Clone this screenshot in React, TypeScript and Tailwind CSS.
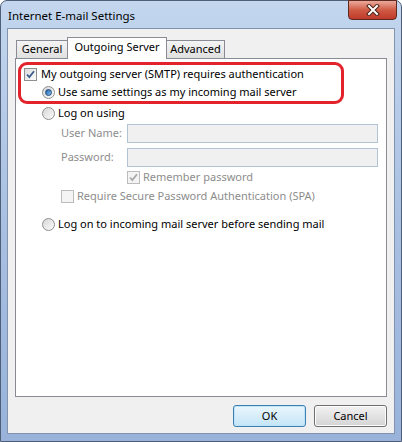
import React from 'react';

const font = "font-['Noto_Sans','Open_Sans',sans-serif]";

function CheckBox({ checked, disabled }: { checked?: boolean; disabled?: boolean }) {
  return (
    <span
      className={`relative flex h-[13px] w-[13px] shrink-0 items-center justify-center border ${
        disabled ? 'border-[#bcbcbc] bg-[#f4f4f4]' : 'border-[#8e8f8f] bg-gradient-to-br from-[#dcdcdc] to-[#fdfdfd]'
      }`}
    >
      {checked && (
        <svg width="11" height="11" viewBox="0 0 11 11">
          <path
            d="M2 5.5 L4.3 8 L9 2.2"
            fill="none"
            stroke={disabled ? '#a9a9a9' : '#3b5a8c'}
            strokeWidth="1.8"
          />
        </svg>
      )}
    </span>
  );
}

function Radio({ checked }: { checked?: boolean }) {
  return (
    <span className="flex h-[13px] w-[13px] shrink-0 items-center justify-center rounded-full border border-[#8e8f8f] bg-gradient-to-br from-[#d6d6d6] to-[#fcfcfc]">
      {checked && (
        <span className="h-[7px] w-[7px] rounded-full border border-[#1d4a80] bg-gradient-to-br from-[#1a5aa3] to-[#8cc6f2]" />
      )}
    </span>
  );
}

function Row({ children, className = '' }: { children: React.ReactNode; className?: string }) {
  return <div className={`flex h-[18px] items-center ${className}`}>{children}</div>;
}

export default function App() {
  return (
    <div className={`h-[442px] w-[402px] bg-white text-[11px] text-black ${font}`}>
      <div className="flex h-full w-full flex-col rounded-t-[7px] border border-[#4f5f78] bg-gradient-to-b from-[#c3d6ee] via-[#a9c0e2] to-[#98b2da] px-[6px] pb-[7px]">
        {/* Title bar */}
        <div className="flex h-[27px] items-start justify-between">
          <span className="pl-px pt-[7px] text-[11.5px] leading-[16px] text-black">Internet E-mail Settings</span>
          <div className="-mt-px mr-[-2px] flex h-[20px] w-[49px] items-center justify-center rounded-b-[4px] border border-[#5e2a20] bg-gradient-to-b from-[#e9a99b] via-[#cf5a44] to-[#c0392b]">
            <svg width="16" height="12" viewBox="0 0 16 12">
              <path d="M4 2 L12 10 M12 2 L4 10" stroke="#4a2118" strokeWidth="4" strokeLinecap="square" />
              <path d="M4 2 L12 10 M12 2 L4 10" stroke="#ffffff" strokeWidth="2" strokeLinecap="square" />
            </svg>
          </div>
        </div>

        {/* Client area */}
        <div className="flex flex-1 flex-col border border-[#8293ad] bg-[#f0f0f0] px-[7px] pt-[8px]">
          {/* Tabs */}
          <div className="relative z-10 flex h-[21px] items-end pl-px">
            <div className="flex h-[18px] w-[51px] items-center justify-center border border-b-0 border-r-0 border-[#898c95] bg-gradient-to-b from-[#f4f4f4] to-[#e0e0e0]">
              General
            </div>
            <div className="-mb-px flex h-[22px] w-[100px] items-center justify-center border border-b-0 border-[#898c95] bg-white pb-[3px]">
              Outgoing Server
            </div>
            <div className="flex h-[18px] w-[58px] items-center justify-center border border-b-0 border-l-0 border-[#898c95] bg-gradient-to-b from-[#f4f4f4] to-[#e0e0e0]">
              Advanced
            </div>
          </div>

          {/* Panel */}
          <div className="flex h-[339px] flex-col border border-[#898c95] bg-white">
            <div className="ml-[2px] mt-[3px] w-[326px] rounded-[9px] border-[3px] border-[#e3232b]">
              <Row className="pl-[3px]">
                <CheckBox checked />
                <span className="ml-[4px]">My outgoing server (SMTP) requires authentication</span>
              </Row>
              <Row className="pl-[21px]">
                <Radio checked />
                <span className="ml-[3px]">Use same settings as my incoming mail server</span>
              </Row>
            </div>

            <Row className="pl-[26px]">
              <Radio />
              <span className="ml-[3px]">Log on using</span>
            </Row>

            <div className="mt-[2px] flex items-center pl-[45px] text-[#8d8d8d]">
              <span className="w-[66px]">User Name:</span>
              <div className="h-[19px] w-[251px] border border-[#b3c3d6] bg-[#f0f0f0]" />
            </div>
            <div className="mt-[5px] flex items-center pl-[45px] text-[#8d8d8d]">
              <span className="w-[66px]">Password:</span>
              <div className="h-[19px] w-[251px] border border-[#b3c3d6] bg-[#f0f0f0]" />
            </div>

            <Row className="mt-[1px] pl-[111px] text-[#8d8d8d]">
              <CheckBox checked disabled />
              <span className="ml-[3px]">Remember password</span>
            </Row>
            <Row className="mt-[1px] pl-[45px] text-[#8d8d8d]">
              <CheckBox disabled />
              <span className="ml-[3px]">Require Secure Password Authentication (SPA)</span>
            </Row>

            <Row className="mt-[10px] pl-[26px]">
              <Radio />
              <span className="ml-[3px]">Log on to incoming mail server before sending mail</span>
            </Row>
          </div>

          {/* Buttons */}
          <div className="mt-[8px] flex justify-end gap-[8px]">
            <button className="flex h-[22px] w-[73px] items-center justify-center rounded-[3px] border border-[#3c7fb1] bg-gradient-to-b from-[#eaf6fd] to-[#c4e5f6] shadow-[inset_0_0_0_1px_#bfe4f9]">
              OK
            </button>
            <button className="flex h-[22px] w-[73px] items-center justify-center rounded-[3px] border border-[#707070] bg-gradient-to-b from-[#f2f2f2] to-[#d4d4d4] shadow-[inset_0_0_0_1px_#fcfcfc]">
              Cancel
            </button>
          </div>
        </div>
      </div>
    </div>
  );
}
